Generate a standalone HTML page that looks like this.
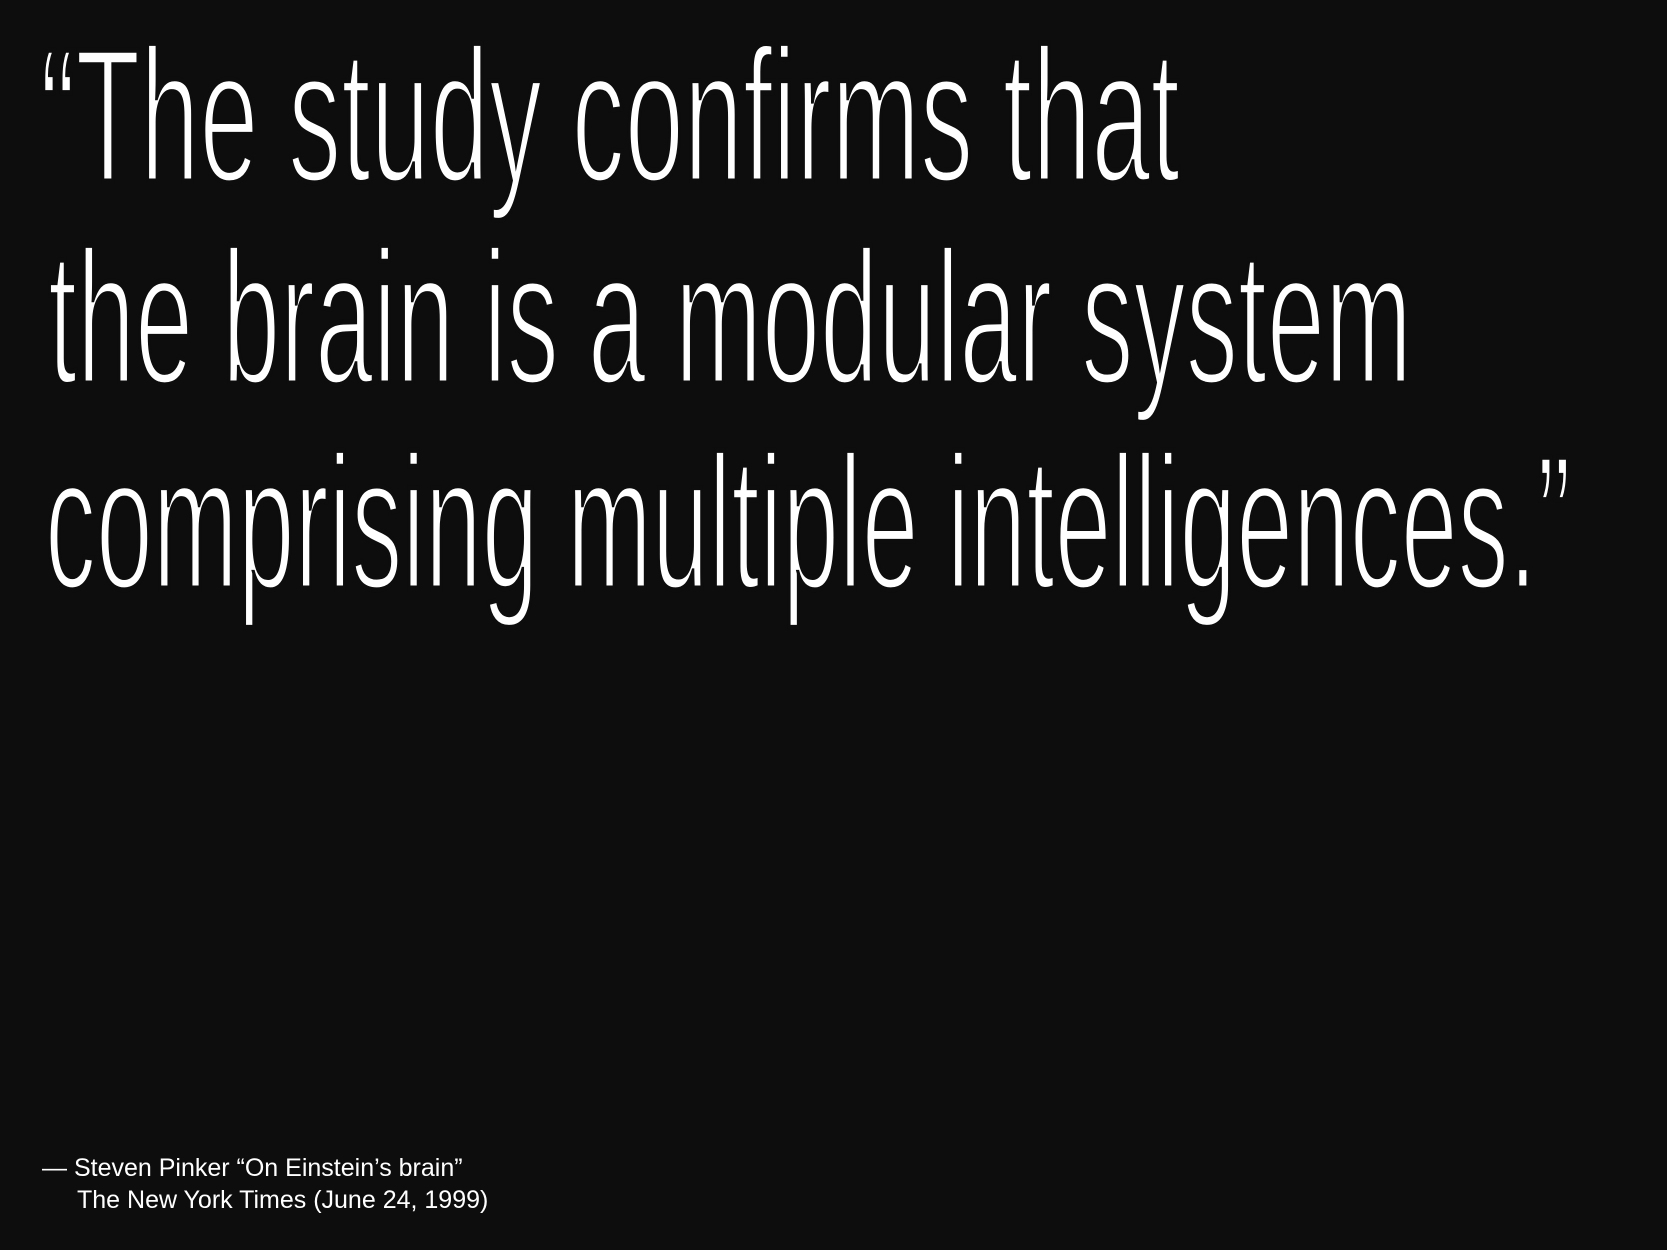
<!DOCTYPE html>
<html><head><meta charset="utf-8"><style>
html,body{margin:0;padding:0;background:#0d0d0d;width:1667px;height:1250px;overflow:hidden}
svg{position:absolute;left:0;top:0}
</style></head><body>
<svg width="1667" height="1250" viewBox="0 0 1667 1250" xmlns="http://www.w3.org/2000/svg">
<g fill="#ffffff" stroke="#0d0d0d" stroke-width="5" font-family="Liberation Sans, sans-serif" font-size="190">
<text x="40" y="181" textLength="1140" lengthAdjust="spacingAndGlyphs">“The study confirms that</text>
<text x="48" y="383" textLength="1364" lengthAdjust="spacingAndGlyphs">the brain is a modular system</text>
<text x="45" y="588" textLength="1526" lengthAdjust="spacingAndGlyphs">comprising multiple intelligences.”</text>
</g>
<g fill="#ffffff" font-family="Liberation Sans, sans-serif" font-size="25">
<text x="42" y="1176">— Steven Pinker “On Einstein’s brain”</text>
<text x="77" y="1208">The New York Times (June 24, 1999)</text>
</g>
</svg>
</body></html>
